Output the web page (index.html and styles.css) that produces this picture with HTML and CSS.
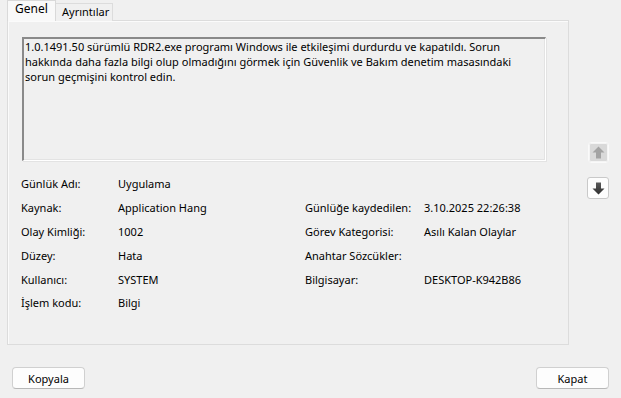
FILE: index.html
```html
<!DOCTYPE html>
<html lang="tr">
<head>
<meta charset="utf-8">
<title>Olay Özellikleri</title>
<link rel="stylesheet" href="styles.css">
</head>
<body>
<div class="window">
  <div class="top">
    <div class="left">
      <div class="tabs">
        <div class="tab active">Genel</div>
        <div class="tab">Ayrıntılar</div>
      </div>
      <div class="panel">
        <div class="desc">1.0.1491.50 sürümlü RDR2.exe programı Windows ile etkileşimi durdurdu ve kapatıldı. Sorun hakkında daha fazla bilgi olup olmadığını görmek için Güvenlik ve Bakım denetim masasındaki sorun geçmişini kontrol edin.</div>
        <div class="props">
          <div class="lbl">Günlük Adı:</div><div class="val">Uygulama</div><div class="lbl"></div><div class="val"></div>
          <div class="lbl">Kaynak:</div><div class="val">Application Hang</div><div class="lbl">Günlüğe kaydedilen:</div><div class="val">3.10.2025 22:26:38</div>
          <div class="lbl">Olay Kimliği:</div><div class="val">1002</div><div class="lbl">Görev Kategorisi:</div><div class="val">Asılı Kalan Olaylar</div>
          <div class="lbl">Düzey:</div><div class="val">Hata</div><div class="lbl">Anahtar Sözcükler:</div><div class="val"></div>
          <div class="lbl">Kullanıcı:</div><div class="val">SYSTEM</div><div class="lbl">Bilgisayar:</div><div class="val">DESKTOP-K942B86</div>
          <div class="lbl">İşlem kodu:</div><div class="val">Bilgi</div><div class="lbl"></div><div class="val"></div>
        </div>
      </div>
    </div>
    <div class="side">
      <div class="arrow-btn disabled" title="Önceki">
        <svg width="13" height="13" viewBox="0 0 13 13"><path d="M6.5 0.5 L12.5 6.5 L9 6.5 L9 12.5 L4 12.5 L4 6.5 L0.5 6.5 Z" fill="#a3a3a3"/></svg>
      </div>
      <div class="arrow-btn" title="Sonraki">
        <svg width="13" height="13" viewBox="0 0 13 13"><defs><linearGradient id="g" x1="0" y1="0" x2="0" y2="1"><stop offset="0" stop-color="#5a5a5a"/><stop offset="1" stop-color="#2e2e2e"/></linearGradient></defs><path d="M6.5 12.5 L12.5 6.5 L9 6.5 L9 0.5 L4 0.5 L4 6.5 L0.5 6.5 Z" fill="url(#g)"/></svg>
      </div>
    </div>
  </div>
  <div class="buttons">
    <button class="btn">Kopyala</button>
    <button class="btn">Kapat</button>
  </div>
</div>
</body>
</html>
```
FILE: styles.css
```css
html, body {
  margin: 0;
  padding: 0;
  background: #f0f0f0;
}
body {
  font-family: "Noto Sans", "Open Sans", sans-serif;
  font-size: 11px;
  color: #000;
  width: 621px;
  height: 398px;
  overflow: hidden;
}
.window {
  display: flex;
  flex-direction: column;
}
.top {
  display: flex;
}
.left {
  margin-left: 7px;
  width: 562px;
  display: flex;
  flex-direction: column;
}
.tabs {
  display: flex;
  height: 20px;
  align-items: flex-end;
  position: relative;
  z-index: 1;
}
.tab {
  box-sizing: border-box;
  height: 18px;
  padding: 0 6px;
  line-height: 16px;
  border: 1px solid #dcdcdc;
  border-bottom: none;
  background: #f0f0f0;
  margin-bottom: -1px;
}
.tab.active {
  height: 21px;
  width: 49px;
  padding: 0 7px;
  line-height: 16px;
  font-size: 12px;
  background: #f9f9f9;
  border-color: #d9d9d9;
}
.tab + .tab {
  border-left: none;
  width: 57px;
}
.panel {
  box-sizing: border-box;
  height: 325px;
  border: 1px solid #dcdcdc;
  box-shadow: inset 1px 1px 0 #fbfbfb;
  background: #f0f0f0;
  padding: 16px 0 0 14px;
}
.desc {
  box-sizing: border-box;
  width: 524px;
  height: 124px;
  border-top: 2px solid #8a8a8a;
  border-left: 2px solid #8a8a8a;
  border-right: 1px solid #ffffff;
  border-bottom: 1px solid #ffffff;
  box-shadow: inset -1px -1px 0 #e3e3e3, 1px 1px 0 #e3e3e3;
  padding: 0 4px 0 1px;
  line-height: 15px;
  background: #f0f0f0;
}
.props {
  display: grid;
  grid-template-columns: 97px 187px 119px auto;
  grid-auto-rows: 23.8px;
  align-items: center;
  margin-top: 11px;
  margin-left: -1px;
  line-height: 15px;
}
.side {
  flex: 1;
  display: flex;
  flex-direction: column;
  align-items: flex-start;
  padding-left: 18px;
  padding-top: 142px;
  gap: 14px;
}
.arrow-btn {
  box-sizing: border-box;
  width: 22px;
  height: 22px;
  border: 1px solid #c9c9c9;
  border-radius: 3px;
  background: #fdfdfd;
  display: flex;
  align-items: center;
  justify-content: center;
}
.arrow-btn.disabled {
  width: 21px;
  height: 21px;
  margin-left: 1px;
  border-color: #fafafa;
  background: #d9d9d9;
  box-shadow: inset 0 0 0 1px #f4f4f4;
}
.buttons {
  display: flex;
  justify-content: space-between;
  padding: 22px 12px 0 12px;
}
.btn {
  box-sizing: border-box;
  width: 73px;
  height: 22px;
  font-family: "Noto Sans", "Open Sans", sans-serif;
  font-size: 11px;
  color: #000;
  background: #fdfdfd;
  border: 1px solid #d0d0d0;
  border-bottom-color: #b8b8b8;
  border-radius: 4px;
  padding: 0;
}
```
